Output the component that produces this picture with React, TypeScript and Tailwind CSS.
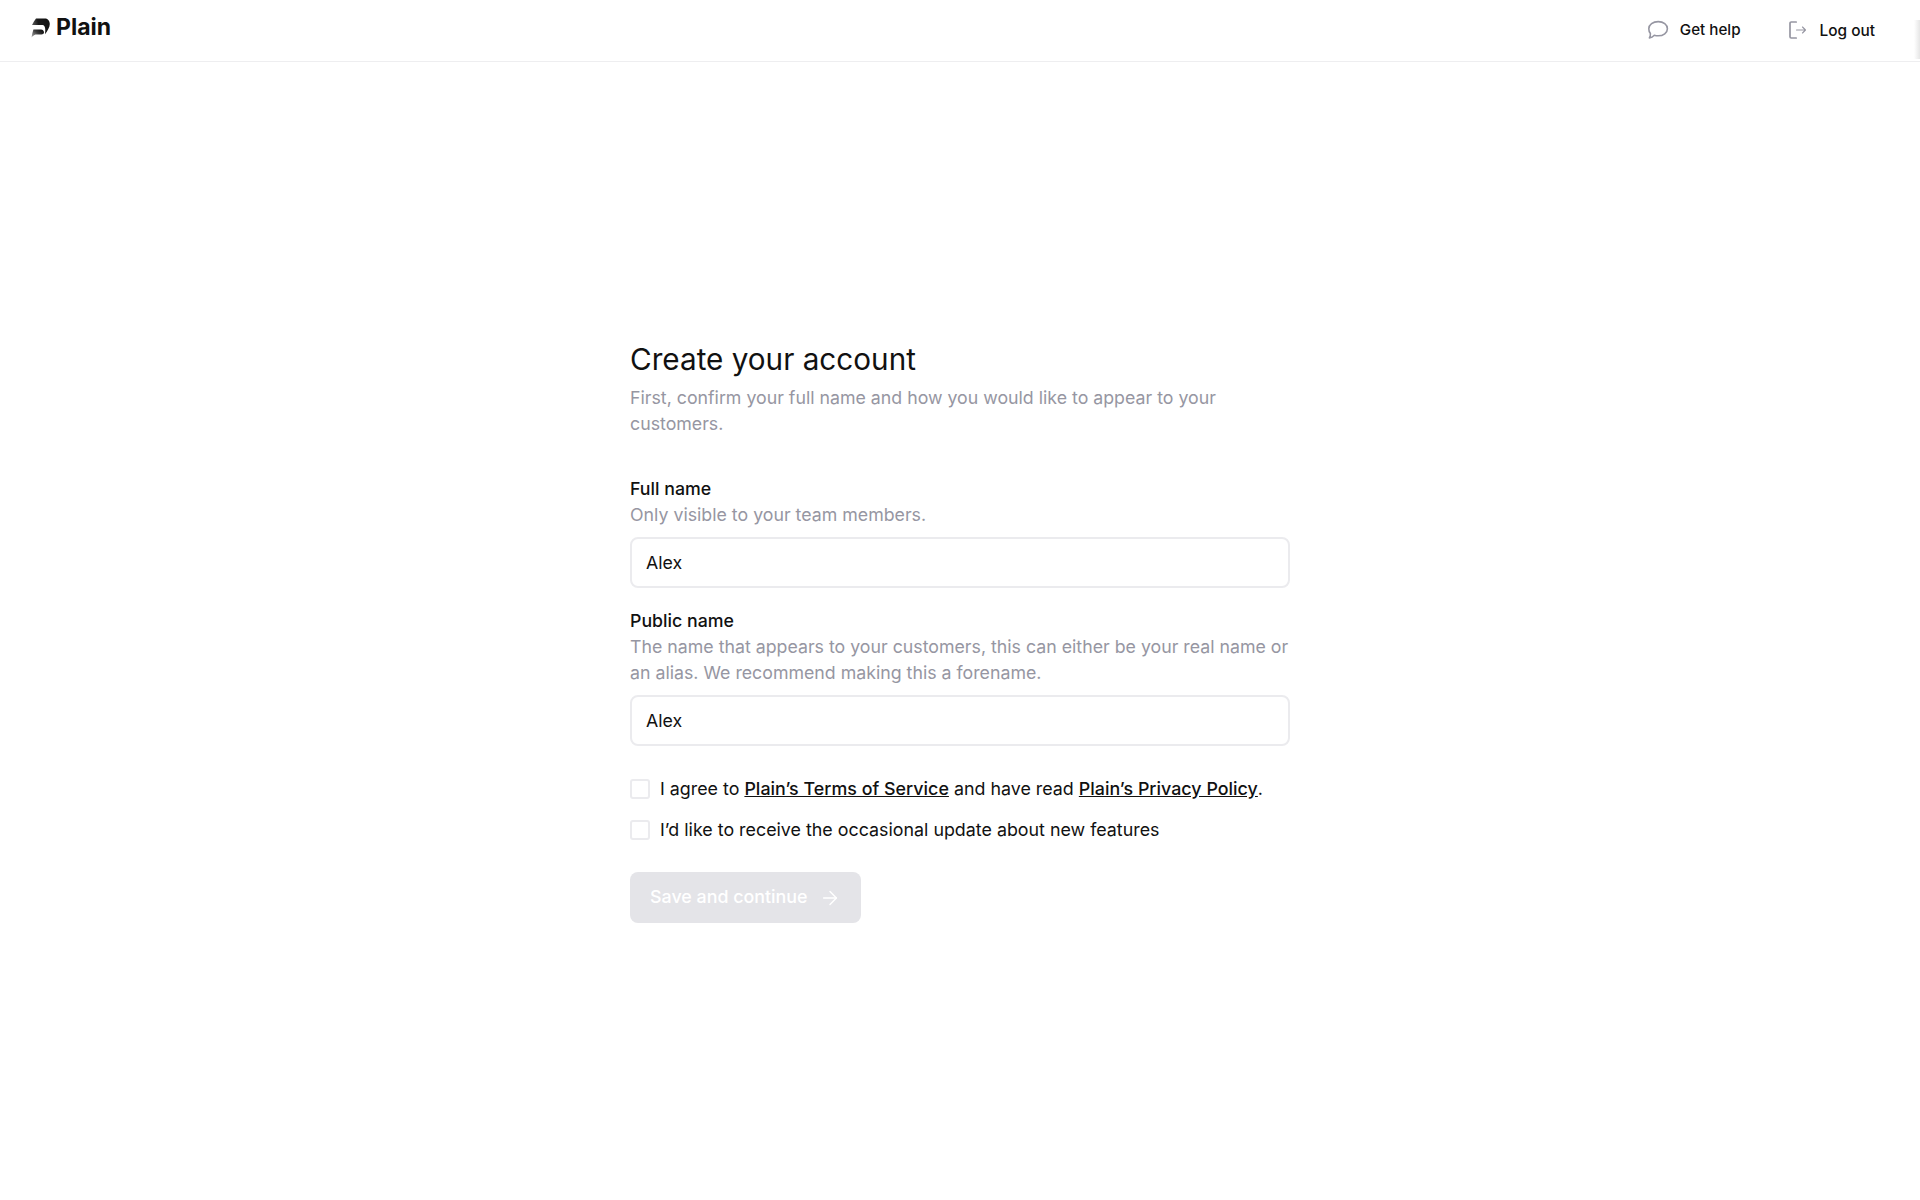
import { ArrowRight } from "lucide-react";
import type { ReactNode } from "react";

function Logo() {
  return (
    <svg width="20" height="20" viewBox="0 0 20 20" className="mr-[5px] shrink-0">
      <defs>
        <linearGradient id="plainGrad" x1="0" y1="1" x2="1" y2="0.3">
          <stop offset="0" stopColor="#b0b0b0" />
          <stop offset="0.6" stopColor="#3a3a3a" />
          <stop offset="1" stopColor="#111" />
        </linearGradient>
        <linearGradient id="plainTop" x1="0" y1="0.6" x2="1" y2="0.4">
          <stop offset="0" stopColor="#666" />
          <stop offset="0.4" stopColor="#1a1a1a" />
          <stop offset="1" stopColor="#111" />
        </linearGradient>
      </defs>
      <path d="M5 0.5H14C17 0.5 18.8 3 18.8 6C18.8 9 16.5 13 14 16.2C14.6 12.5 14.6 7.2 11.5 7.1H1C2.2 4.6 3.6 2.4 5 0.5Z" fill="url(#plainTop)" />
      <path d="M0.8 11.5H10C12 11.5 13 13 13 15C12.4 16.2 11 16.5 9 16.5H4.5C3 17 1.6 18.2 0.5 19.5C1 16.5 1.6 14 2.4 11.5Z" fill="url(#plainGrad)" />
    </svg>
  );
}

function ChatIcon() {
  return (
    <svg width="22" height="20" viewBox="0 0 22 20" fill="none" stroke="#9696a2" strokeWidth="1.6" strokeLinejoin="round">
      <path d="M11.2 1.6C16.4 1.6 20.4 4.6 20.4 8.7C20.4 12.8 16.4 15.8 11.2 15.8C9.8 15.8 8.5 15.6 7.3 15.2C6 16.6 4.2 17.6 2.4 17.9C3.2 16.6 3.5 15.2 3.4 13.6C2.4 12.3 1.8 10.6 1.8 8.7C1.8 4.6 6 1.6 11.2 1.6Z" />
    </svg>
  );
}

function LogoutIcon() {
  return (
    <svg width="18" height="18" viewBox="0 0 18 18" fill="none" stroke="#9696a2" strokeLinecap="round" strokeLinejoin="round">
      <path d="M7.2 1H2.2C1.5 1 1 1.5 1 2.2V15.8C1 16.5 1.5 17 2.2 17H7.2" strokeWidth="1.7" />
      <path d="M7.5 9H16.5M13.5 6L16.5 9L13.5 12" strokeWidth="1.1" />
    </svg>
  );
}

function Field({ label, hint, value }: { label: string; hint: string; value: string }) {
  return (
    <div className="flex flex-col">
      <label className="text-[17.75px] leading-[26px] font-medium text-[#111]">{label}</label>
      <p className="text-[17.75px] leading-[25.5px] text-[#9696a2]">{hint}</p>
      <input
        readOnly
        value={value}
        className="mt-[10px] h-[51px] w-full rounded-[8px] border-2 border-[#ebebee] bg-white px-[14px] text-[17.75px] text-[#111] outline-none"
      />
    </div>
  );
}

function Check({ children }: { children: ReactNode }) {
  return (
    <div className="flex items-center gap-[10px] h-[24px]">
      <span className="h-[20px] w-[20px] rounded-[3px] border-2 border-[#ebebee] bg-white shrink-0" />
      <span className="text-[17.85px] leading-[24px] text-[#111]">{children}</span>
    </div>
  );
}

export default function App() {
  return (
    <div className="relative min-h-[1200px] bg-white font-['Inter',sans-serif]">
      <header className="flex h-[62px] items-center justify-between border-b border-[#eeeef0] pl-[31px] pr-[45px]">
        <div className="flex items-center mt-[-6px]">
          <Logo />
          <span className="text-[23px] font-bold text-[#111] leading-none">Plain</span>
        </div>
        <nav className="flex items-center gap-[48px]">
          <a className="flex items-center gap-[11px] text-[15.2px] font-medium text-[#111]">
            <ChatIcon />
            Get help
          </a>
          <a className="flex items-center gap-[13px] text-[15.4px] font-medium text-[#111]">
            <LogoutIcon />
            Log out
          </a>
        </nav>
      </header>
      <div className="absolute right-0 top-[20px] h-[39px] w-[6px] bg-gradient-to-r from-transparent to-[#e6e6e6]" />
      <main className="mx-auto w-[660px] pt-[278px]">
        <h1 className="text-[29.7px] leading-[38px] text-[#111]">Create your account</h1>
        <p className="mt-[7px] text-[17.75px] leading-[25.5px] text-[#9696a2]">
          First, confirm your full name and how you would like to appear to your customers.
        </p>
        <div className="mt-[39.5px] flex flex-col gap-[20px]">
          <Field label="Full name" hint="Only visible to your team members." value="Alex" />
          <Field
            label="Public name"
            hint="The name that appears to your customers, this can either be your real name or an alias. We recommend making this a forename."
            value="Alex"
          />
        </div>
        <div className="mt-[31px] flex flex-col gap-[17px]">
          <Check>
            I agree to <a className="font-medium underline tracking-[0.02px]">Plain’s Terms of Service</a> and have read{" "}
            <a className="font-medium underline tracking-[0.02px]">Plain’s Privacy Policy</a>.
          </Check>
          <Check>I’d like to receive the occasional update about new features</Check>
        </div>
        <button className="mt-[30px] flex h-[51px] items-center gap-[11px] rounded-[8px] bg-[#e4e4e8] px-[20px] text-[17.85px] font-medium text-white">
          Save and continue
          <ArrowRight size={22} strokeWidth={1.6} />
        </button>
      </main>
    </div>
  );
}
